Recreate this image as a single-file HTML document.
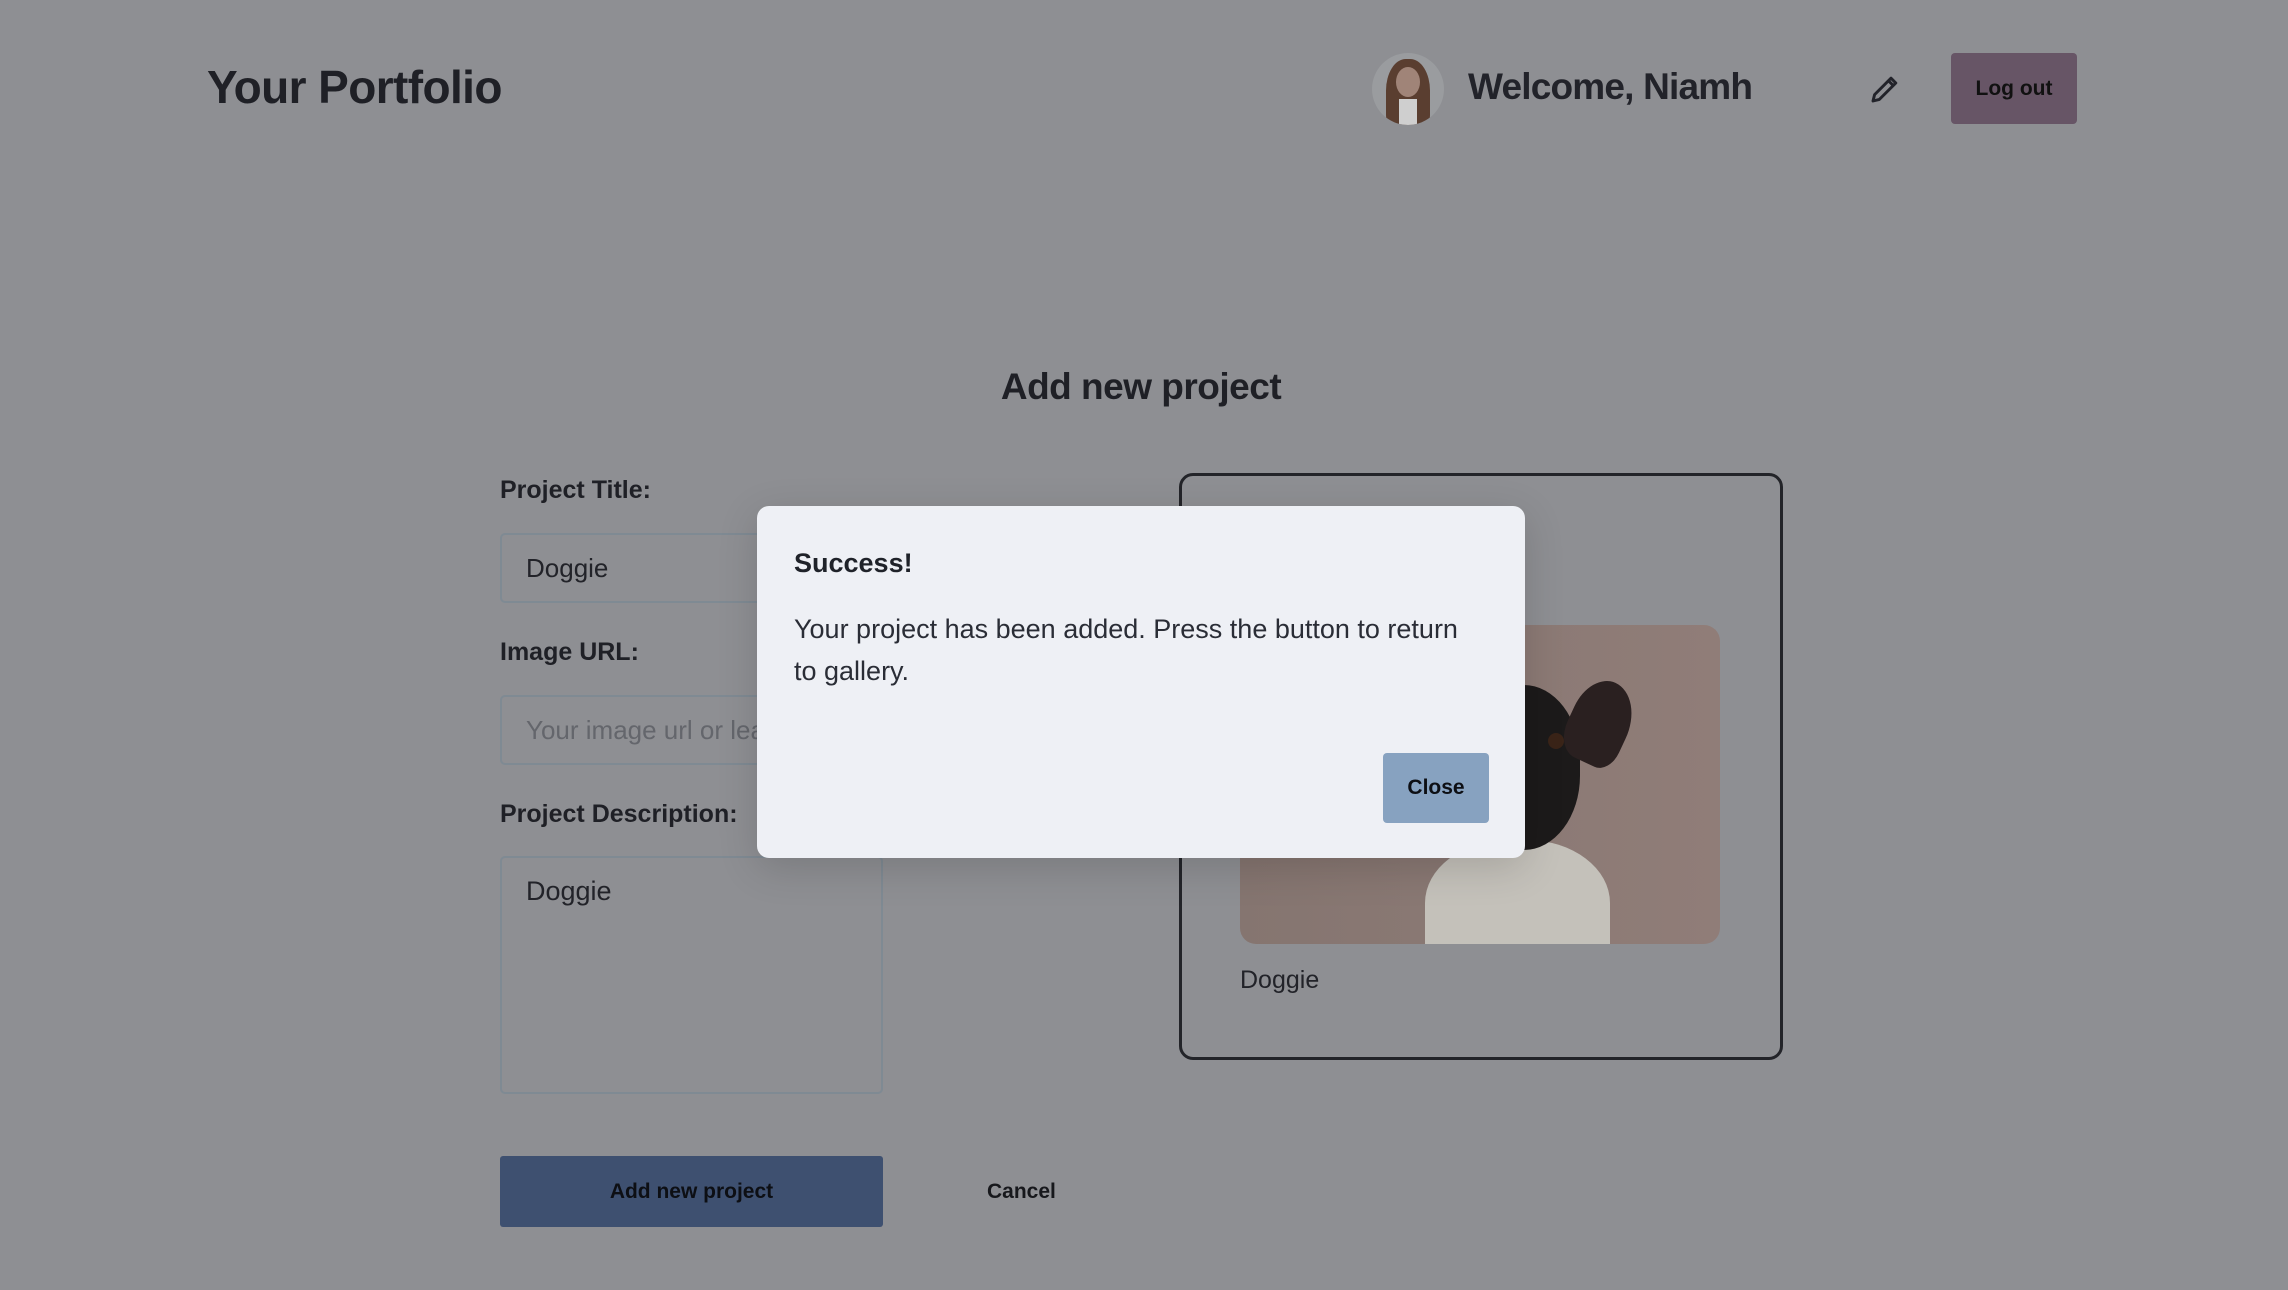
<!DOCTYPE html>
<html><head><meta charset="utf-8"><style>
*{box-sizing:border-box;margin:0;padding:0}
body{width:2288px;height:1290px;background:#8e8f93;font-family:"Liberation Sans",sans-serif;color:#222329;position:relative;overflow:hidden}
.abs{position:absolute}
.lbl{font-weight:bold;font-size:25px;color:#1f2026}
.inp{border:2px solid #7f8a93;border-radius:5px;left:500px;width:383px;font-size:26px;padding-left:24px;background:#8e8f93}
</style></head><body>
<div class="abs" style="left:207px;top:60px;font-size:46px;font-weight:bold;color:#1f2026;letter-spacing:-0.6px">Your Portfolio</div>
<div class="abs" style="left:1372px;top:53px;width:72px;height:72px;border-radius:50%;background:#9a9c9f;overflow:hidden">
 <div class="abs" style="left:14px;top:6px;width:44px;height:70px;border-radius:45% 45% 20% 20%;background:#5a3e30"></div>
 <div class="abs" style="left:24px;top:14px;width:24px;height:30px;border-radius:50%;background:#a08478"></div>
 <div class="abs" style="left:27px;top:46px;width:18px;height:30px;background:#cfcfcf"></div>
</div>
<div class="abs" style="left:1468px;top:66px;font-size:37px;font-weight:bold;color:#22232a;letter-spacing:-0.8px">Welcome, Niamh</div>
<svg class="abs" style="left:1869px;top:73px" width="32" height="32" viewBox="0 0 24 24"><path d="M3 21l1.2-4.8L16.5 3.9l3.6 3.6L7.8 19.8z M14.6 5.8l3.6 3.6" fill="none" stroke="#22232a" stroke-width="2.2" stroke-linejoin="round"/></svg>
<div class="abs" style="left:1951px;top:53px;width:126px;height:71px;background:#675566;border-radius:4px;font-size:21px;font-weight:bold;color:#111;display:flex;align-items:center;justify-content:center">Log out</div>
<div class="abs" style="left:0;width:2282px;top:366px;text-align:center;font-size:37px;font-weight:bold;color:#1f2026;letter-spacing:-0.5px">Add new project</div>
<div class="abs lbl" style="left:500px;top:476px">Project Title:</div>
<div class="abs inp" style="top:533px;height:70px;line-height:66px">Doggie</div>
<div class="abs lbl" style="left:500px;top:638px">Image URL:</div>
<div class="abs inp" style="top:695px;height:70px;line-height:66px;color:#64666c">Your image url or leave blank</div>
<div class="abs lbl" style="left:500px;top:800px">Project Description:</div>
<div class="abs inp" style="top:856px;height:238px;padding-top:18px;font-size:27px">Doggie</div>
<div class="abs" style="left:500px;top:1156px;width:383px;height:71px;background:#3e5070;border-radius:3px;font-size:21px;font-weight:bold;color:#0d0f14;display:flex;align-items:center;justify-content:center">Add new project</div>
<div class="abs" style="left:987px;top:1180px;font-size:21px;font-weight:bold;color:#17181c">Cancel</div>
<div class="abs" style="left:1179px;top:473px;width:604px;height:587px;border:3px solid #232429;border-radius:14px"></div>
<div class="abs" style="left:1240px;top:625px;width:480px;height:319px;border-radius:16px;background:linear-gradient(90deg,#857570,#907d78);overflow:hidden">
 <div class="abs" style="left:185px;top:215px;width:185px;height:140px;border-radius:45% 45% 0 0;background:#c4c1ba"></div>
 <div class="abs" style="left:215px;top:60px;width:125px;height:165px;border-radius:40% 45% 45% 40%;background:#1c1a1a"></div>
 <div class="abs" style="left:225px;top:150px;width:50px;height:70px;border-radius:50%;background:#6e4226"></div>
 <div class="abs" style="left:330px;top:55px;width:60px;height:85px;border-radius:50% 60% 30% 40%;background:#2a2020;transform:rotate(25deg)"></div>
 <div class="abs" style="left:308px;top:108px;width:16px;height:16px;border-radius:50%;background:#3a2418"></div>
</div>
<div class="abs" style="left:1240px;top:966px;font-size:25px;color:#222329">Doggie</div>
<div class="abs" style="left:757px;top:506px;width:768px;height:352px;background:#eef0f5;border-radius:12px;box-shadow:0 10px 40px rgba(0,0,0,.15)">
 <div class="abs" style="left:37px;top:42px;font-size:27px;font-weight:bold;color:#1f2229">Success!</div>
 <div class="abs" style="left:37px;top:102px;width:690px;font-size:27px;line-height:42px;color:#2a2d36">Your project has been added. Press the button to return to gallery.</div>
 <div class="abs" style="left:626px;top:247px;width:106px;height:70px;background:#87a2c0;border-radius:4px;font-size:21px;font-weight:bold;color:#0d0f14;display:flex;align-items:center;justify-content:center">Close</div>
</div>
</body></html>
